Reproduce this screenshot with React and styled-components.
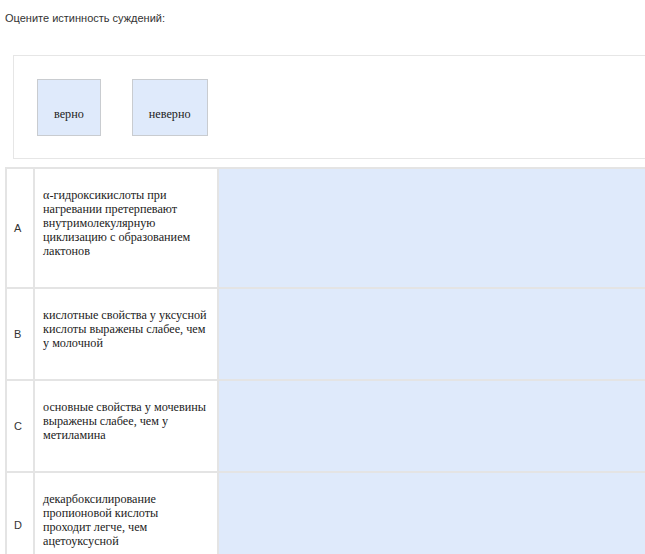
import React from "react";
import styled, { createGlobalStyle } from "styled-components";

const Global = createGlobalStyle`
  html, body { margin: 0; padding: 0; background: #fff; overflow: hidden; }
  body { font-family: "Liberation Sans", Arial, sans-serif; }
`;

const Page = styled.div`
  width: 900px;
  padding: 0 0 0 5px;
`;

const Title = styled.div`
  font-family: "Liberation Sans", Arial, sans-serif;
  font-size: 11px;
  line-height: 13px;
  color: #333;
  padding-top: 12px;
  height: 55px;
  box-sizing: border-box;
`;

const Bank = styled.div`
  margin-left: 8px;
  border: 1px solid #e6e6e6;
  padding: 23px 23px 22px;
  display: flex;
  gap: 31px;
  height: 104px;
  box-sizing: border-box;
`;

const Chip = styled.div`
  height: 57px;
  box-sizing: border-box;
  padding: 27px 16px 0;
  background: #dfeafb;
  border: 1px solid #c9ccd0;
  font-family: "Liberation Serif", "Times New Roman", serif;
  font-size: 12.2px;
  line-height: 14px;
  color: #222;
`;

const Table = styled.table`
  margin-top: 8px;
  border-collapse: collapse;
  width: 895px;
`;

const Cell = styled.td`
  border: 2px solid #e4e4e4;
  padding: 0;
`;

const LetterCell = styled(Cell)`
  width: 19px;
  padding-left: 7px;
  text-align: left;
  vertical-align: middle;
  font-family: "Liberation Sans", Arial, sans-serif;
  font-size: 11px;
  color: #333;
`;

const TextCell = styled(Cell)`
  width: 165px;
  vertical-align: top;
  padding: 19px 9px 29px 8px;
  font-family: "Liberation Serif", "Times New Roman", serif;
  font-size: 12.2px;
  line-height: 14px;
  color: #222;
`;

const DropCell = styled(Cell)`
  background: #dfeafb;
  border-left-color: #d9dde3;
`;

const rows = [
  ["A", "α-гидроксикислоты при нагревании претерпевают внутримолекулярную циклизацию с образованием лактонов"],
  ["B", "кислотные свойства у уксусной кислоты выражены слабее, чем у молочной"],
  ["C", "основные свойства у мочевины выражены слабее, чем у метиламина"],
  ["D", "декарбоксилирование пропионовой кислоты проходит легче, чем ацетоуксусной"],
];

export default function App() {
  return (
    <Page>
      <Global />
      <Title>Оцените истинность суждений:</Title>
      <Bank>
        <Chip>верно</Chip>
        <Chip>неверно</Chip>
      </Bank>
      <Table>
        <tbody>
          {rows.map(([l, t]) => (
            <tr key={l}>
              <LetterCell>{l}</LetterCell>
              <TextCell>{t}</TextCell>
              <DropCell />
            </tr>
          ))}
        </tbody>
      </Table>
    </Page>
  );
}
